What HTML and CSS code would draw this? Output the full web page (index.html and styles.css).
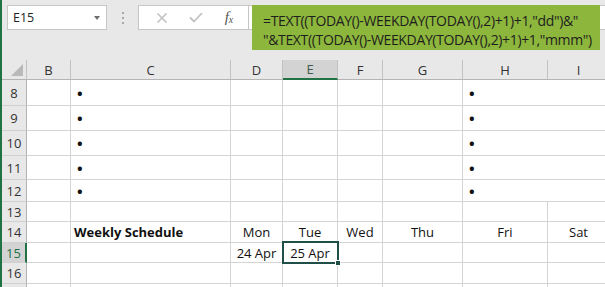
FILE: index.html
```html
<!DOCTYPE html>
<html lang="en">
<head>
    <meta charset="UTF-8">
    <meta name="viewport" content="width=device-width, initial-scale=1.0">
    <title>Weekly Schedule</title>
    <link rel="stylesheet" href="styles.css">
</head>
<body>
    <div class="app">
        <div class="toolbar">
            <div class="namebox">
                <span>E15</span>
                <span class="caret"></span>
            </div>
            <div class="grip"><i></i><i></i><i></i></div>
            <div class="fbuttons">
                <svg class="btn" width="12" height="10" viewBox="0 0 12 10"><path d="M1.5 0.5 L10.5 9.5 M10.5 0.5 L1.5 9.5" stroke="#c2c2c2" stroke-width="1.6" fill="none"/></svg>
                <svg class="btn" width="14" height="11" viewBox="0 0 14 11"><path d="M1 5.5 L5 9.5 L13 1" stroke="#c2c2c2" stroke-width="1.8" fill="none"/></svg>
                <span class="fx">f<sub>x</sub></span>
            </div>
            <div class="finput"></div>
            <!-- formula shown over the bar -->
            <div class="formula">=TEXT((TODAY()-WEEKDAY(TODAY(),2)+1)+1,"dd")&amp;"<br>"&amp;TEXT((TODAY()-WEEKDAY(TODAY(),2)+1)+1,"mmm")</div>
        </div>

        <div class="sheet">
            <div class="corner"></div>
            <div class="ch">B</div>
            <div class="ch">C</div>
            <div class="ch">D</div>
            <div class="ch sel">E</div>
            <div class="ch">F</div>
            <div class="ch">G</div>
            <div class="ch">H</div>
            <div class="ch">I</div>

            <div class="rh">8</div>
            <div class="c"></div>
            <div class="c bullet">•</div>
            <div class="c"></div>
            <div class="c"></div>
            <div class="c"></div>
            <div class="c"></div>
            <div class="c bullet wide">•</div>

            <div class="rh">9</div>
            <div class="c"></div>
            <div class="c bullet">•</div>
            <div class="c"></div>
            <div class="c"></div>
            <div class="c"></div>
            <div class="c"></div>
            <div class="c bullet wide">•</div>

            <div class="rh">10</div>
            <div class="c"></div>
            <div class="c bullet">•</div>
            <div class="c"></div>
            <div class="c"></div>
            <div class="c"></div>
            <div class="c"></div>
            <div class="c bullet wide">•</div>

            <div class="rh">11</div>
            <div class="c"></div>
            <div class="c bullet">•</div>
            <div class="c"></div>
            <div class="c"></div>
            <div class="c"></div>
            <div class="c"></div>
            <div class="c bullet wide">•</div>

            <div class="rh">12</div>
            <div class="c"></div>
            <div class="c bullet">•</div>
            <div class="c"></div>
            <div class="c"></div>
            <div class="c"></div>
            <div class="c"></div>
            <div class="c bullet wide">•</div>

            <div class="rh">13</div>
            <div class="c"></div>
            <div class="c"></div>
            <div class="c"></div>
            <div class="c"></div>
            <div class="c"></div>
            <div class="c"></div>
            <div class="c"></div>
            <div class="c"></div>

            <div class="rh">14</div>
            <div class="c"></div>
            <div class="c title">Weekly Schedule</div>
            <div class="c mid">Mon</div>
            <div class="c mid">Tue</div>
            <div class="c mid">Wed</div>
            <div class="c mid">Thu</div>
            <div class="c mid">Fri</div>
            <div class="c mid">Sat</div>

            <div class="rh sel">15</div>
            <div class="c"></div>
            <div class="c"></div>
            <div class="c mid">24 Apr</div>
            <div class="c mid active">25 Apr</div>
            <div class="c"></div>
            <div class="c"></div>
            <div class="c"></div>
            <div class="c"></div>

            <div class="rh">16</div>
            <div class="c"></div>
            <div class="c"></div>
            <div class="c"></div>
            <div class="c"></div>
            <div class="c"></div>
            <div class="c"></div>
            <div class="c"></div>
            <div class="c"></div>

            <div class="rh"></div>
            <div class="c"></div>
            <div class="c"></div>
            <div class="c"></div>
            <div class="c"></div>
            <div class="c"></div>
            <div class="c"></div>
            <div class="c"></div>
            <div class="c"></div>
        </div>
    </div>
</body>
</html>
```

FILE: styles.css
```css
body {
    margin: 0;
    font-family: "Open Sans", "Noto Sans", sans-serif;
    background-color: #fff;
}

.app {
    width: 603px;
    height: 287px;
    overflow: hidden;
    border-left: 2px solid #217346;
}

.toolbar {
    position: relative;
    height: 60px;
    background-color: #e8e8e8;
    display: flex;
    align-items: flex-start;
    padding-top: 5px;
    box-sizing: border-box;
}

.namebox {
    margin-left: 5px;
    width: 100px;
    height: 25px;
    box-sizing: border-box;
    background-color: #fff;
    border: 1px solid #c6c6c6;
    display: flex;
    align-items: center;
    justify-content: space-between;
    padding: 0 6px 0 5px;
    font-size: 12.5px;
    color: #222;
}

.caret {
    width: 0;
    height: 0;
    border-left: 3.5px solid transparent;
    border-right: 3.5px solid transparent;
    border-top: 4px solid #6e6e6e;
}

.grip {
    width: 31px;
    height: 25px;
    display: flex;
    flex-direction: column;
    align-items: center;
    justify-content: center;
    gap: 3px;
}

.grip i {
    display: block;
    width: 2px;
    height: 2px;
    background-color: #a8a8a8;
}

.fbuttons {
    width: 111px;
    height: 25px;
    box-sizing: border-box;
    background-color: #fff;
    border: 1px solid #c6c6c6;
    display: flex;
    align-items: center;
    justify-content: space-around;
    padding: 0 4px 0 6px;
}

.fx {
    font-family: "Liberation Serif", serif;
    font-style: italic;
    font-size: 15px;
    color: #555;
    line-height: 1;
}

.fx sub {
    font-size: 10px;
    vertical-align: -1px;
}

.finput {
    flex: 1;
    height: 25px;
    background-color: #fff;
    border-top: 1px solid #c6c6c6;
    border-bottom: 1px solid #c6c6c6;
    box-sizing: border-box;
}

.formula {
    position: absolute;
    left: 250px;
    top: 5px;
    width: 348px;
    height: 45px;
    box-sizing: border-box;
    background-color: #8db63c;
    padding: 6px 0 0 11px;
    font-size: 14px;
    letter-spacing: -0.35px;
    line-height: 19px;
    color: #1e1e1e;
    white-space: nowrap;
}

.sheet {
    display: grid;
    grid-template-columns: 25px 44px 160px 52px 55px 45px 80px 85px 62px;
    grid-template-rows: 20px 26px 25px 25px 24px 22px 20px 21px 20px 21px 21px;
    font-size: 13px;
}

.corner {
    position: relative;
    background-color: #e8e8e8;
    border-right: 1px solid #c2c2c2;
    border-bottom: 1px solid #b4b4b4;
}

.corner::after {
    content: "";
    position: absolute;
    right: 3px;
    bottom: 3px;
    width: 0;
    height: 0;
    border-left: 12px solid transparent;
    border-bottom: 12px solid #b9b9b9;
}

.ch {
    background-color: #e8e8e8;
    border-right: 1px solid #c2c2c2;
    border-bottom: 1px solid #b4b4b4;
    display: flex;
    align-items: center;
    justify-content: center;
    color: #333;
}

.ch.sel {
    background-color: #d3d3d3;
    border-bottom: 2px solid #217346;
    color: #3c5a4d;
}

.rh {
    background-color: #e8e8e8;
    border-right: 1px solid #b4b4b4;
    border-bottom: 1px solid #d0d0d0;
    display: flex;
    align-items: center;
    justify-content: center;
    color: #333;
}

.rh.sel {
    background-color: #d3d3d3;
    border-right: 2px solid #217346;
    color: #217346;
}

.c {
    border-right: 1px solid #d4d4d4;
    border-bottom: 1px solid #d4d4d4;
    display: flex;
    align-items: center;
    white-space: nowrap;
    color: #111;
}

.wide {
    grid-column: span 2;
}

.bullet {
    padding-left: 6px;
    font-size: 15px;
    font-weight: bold;
}

.title {
    padding-left: 3px;
    font-weight: bold;
}

.mid {
    justify-content: center;
}

.active {
    position: relative;
}

.active::after {
    content: "";
    position: absolute;
    top: -2px;
    left: -1px;
    right: -2px;
    bottom: -2px;
    border: 2px solid #1f4f48;
}

.active::before {
    content: "";
    position: absolute;
    right: -4px;
    bottom: -4px;
    width: 4px;
    height: 4px;
    background-color: #1f4f48;
    border: 1px solid #fff;
    z-index: 1;
}
```
